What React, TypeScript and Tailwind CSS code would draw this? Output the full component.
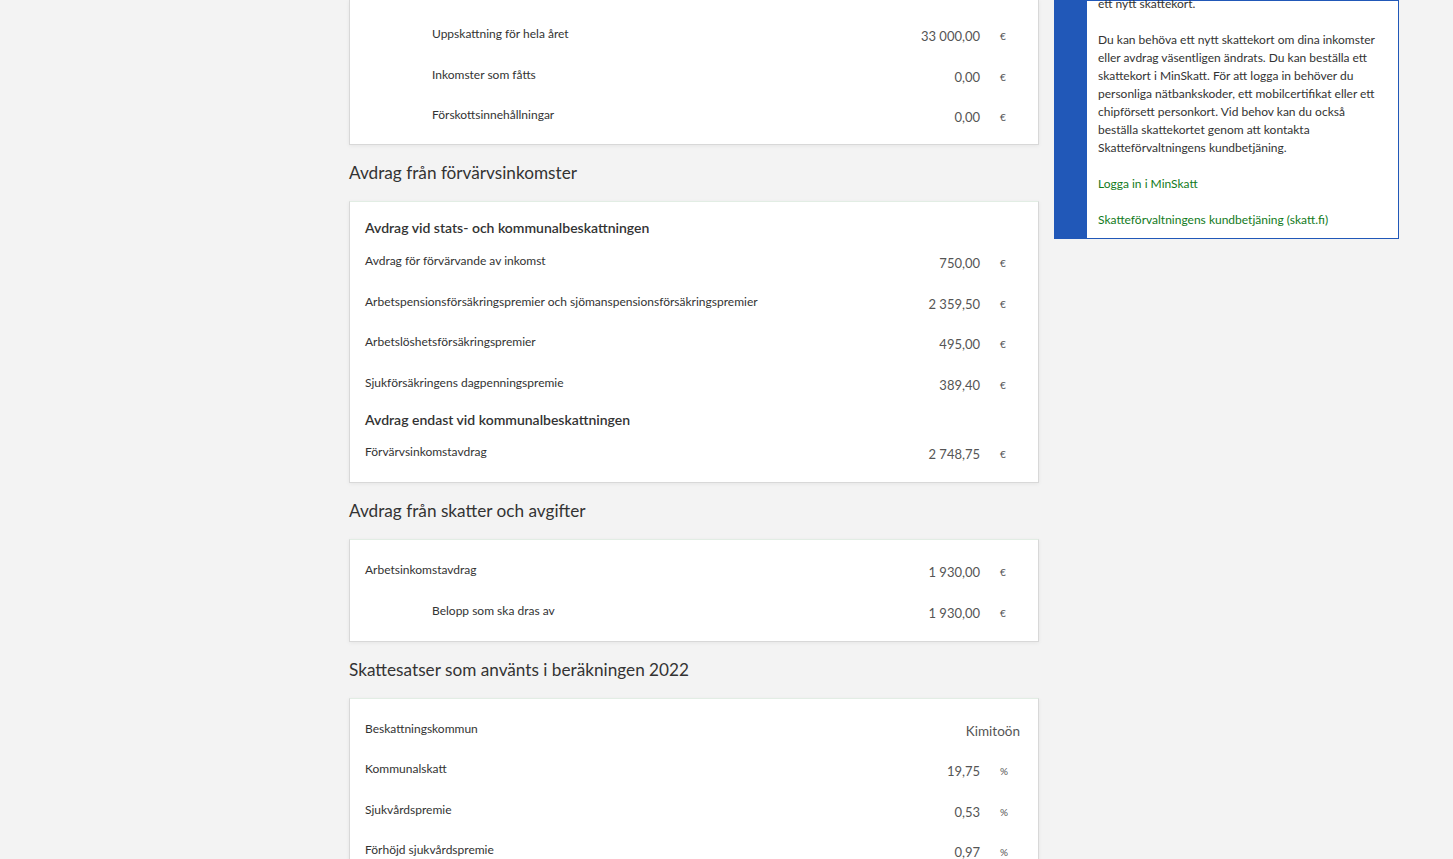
import React from 'react';

type Row = { label: string; value: string; unit?: string; indent?: boolean };

const font = { fontFamily: 'Lato, "Open Sans", sans-serif' };

function DataRow({ row }: { row: Row }) {
    return (
        <div className="flex h-[40.4px] items-center">
            <div className={`flex-1 pb-[4px] text-[12px] leading-[16px] text-[#333] ${row.indent ? 'pl-[67px]' : ''}`}>
                {row.label}
            </div>
            {row.unit === undefined ? (
                <div className="text-[13.5px] leading-[20px] text-[#555]">{row.value}</div>
            ) : (
                <>
                    <div className="text-right text-[13px] leading-[20px] text-[#555]">{row.value}</div>
                    <div className="ml-[20px] w-[20px] text-[10px] leading-[20px] text-[#555]">{row.unit}</div>
                </>
            )}
        </div>
    );
}

function SubHeading({ children, h }: { children: React.ReactNode; h: string }) {
    return (
        <div className={`flex items-center ${h} text-[14px] font-semibold text-[#333]`}>{children}</div>
    );
}

function Card({ children, className = '' }: { children: React.ReactNode; className?: string }) {
    return (
        <div className={`border border-[#d8d8d8] border-t-[#e2ede4] bg-white pl-[15px] pr-[18px] shadow-[0_1px_4px_rgba(0,0,0,0.06)] ${className}`}>
            {children}
        </div>
    );
}

function SectionTitle({ children }: { children: React.ReactNode }) {
    return <h2 className="flex h-[56px] items-center text-[17.2px] text-[#333]">{children}</h2>;
}

export default function App() {
    const topRows: Row[] = [
        { label: 'Uppskattning för hela året', value: '33 000,00', unit: '€', indent: true },
        { label: 'Inkomster som fåtts', value: '0,00', unit: '€', indent: true },
        { label: 'Förskottsinnehållningar', value: '0,00', unit: '€', indent: true },
    ];
    const statsRows: Row[] = [
        { label: 'Avdrag för förvärvande av inkomst', value: '750,00', unit: '€' },
        { label: 'Arbetspensionsförsäkringspremier och sjömanspensionsförsäkringspremier', value: '2 359,50', unit: '€' },
        { label: 'Arbetslöshetsförsäkringspremier', value: '495,00', unit: '€' },
        { label: 'Sjukförsäkringens dagpenningspremie', value: '389,40', unit: '€' },
    ];
    const skatterRows: Row[] = [
        { label: 'Arbetsinkomstavdrag', value: '1 930,00', unit: '€' },
        { label: 'Belopp som ska dras av', value: '1 930,00', unit: '€', indent: true },
    ];
    const satsRows: Row[] = [
        { label: 'Beskattningskommun', value: 'Kimitoön' },
        { label: 'Kommunalskatt', value: '19,75', unit: '%' },
        { label: 'Sjukvårdspremie', value: '0,53', unit: '%' },
        { label: 'Förhöjd sjukvårdspremie', value: '0,97', unit: '%' },
    ];

    return (
        <div className="h-[859px] overflow-hidden bg-[#f3f3f3]" style={font}>
            <div className="flex gap-[15px] pl-[349px]">
                <main className="w-[690px] shrink-0">
                    <Card className="border-t-0 pt-[16px] pb-[7px]">
                        {topRows.map((r) => <DataRow key={r.label} row={r} />)}
                    </Card>

                    <SectionTitle>Avdrag från förvärvsinkomster</SectionTitle>
                    <Card className="pt-[10px] pb-[8px]">
                        <SubHeading h="h-[31px]">Avdrag vid stats- och kommunalbeskattningen</SubHeading>
                        {statsRows.map((r) => <DataRow key={r.label} row={r} />)}
                        <SubHeading h="h-[29px]">Avdrag endast vid kommunalbeskattningen</SubHeading>
                        <DataRow row={{ label: 'Förvärvsinkomstavdrag', value: '2 748,75', unit: '€' }} />
                    </Card>

                    <SectionTitle>Avdrag från skatter och avgifter</SectionTitle>
                    <Card className="pt-[12px] pb-[8px]">
                        {skatterRows.map((r) => <DataRow key={r.label} row={r} />)}
                    </Card>

                    <SectionTitle>Skattesatser som använts i beräkningen 2022</SectionTitle>
                    <Card className="pt-[12px] pb-[8px]">
                        {satsRows.map((r) => <DataRow key={r.label} row={r} />)}
                    </Card>
                </main>

                <aside className="flex h-fit w-[345px] shrink-0">
                    <div className="w-[33px] shrink-0 bg-[#2158b8]" />
                    <div className="flex-1 border border-l-0 border-[#2158b8] bg-white pl-[11px] pr-[12px] pb-[9px] text-[12px] leading-[18px] text-[#333]">
                        <p className="-mt-[6px]">ett nytt skattekort.</p>
                        <p className="mt-[18px]">
                            Du kan behöva ett nytt skattekort om dina inkomster eller avdrag väsentligen ändrats. Du kan beställa ett skattekort i MinSkatt. För att logga in behöver du personliga nätbankskoder, ett mobilcertifikat eller ett chipförsett personkort. Vid behov kan du också beställa skattekortet genom att kontakta Skatteförvaltningens kundbetjäning.
                        </p>
                        <p className="mt-[18px]">
                            <a href="#" className="text-[#127a1c]">Logga in i MinSkatt</a>
                        </p>
                        <p className="mt-[18px]">
                            <a href="#" className="text-[#127a1c]">Skatteförvaltningens kundbetjäning (skatt.fi)</a>
                        </p>
                    </div>
                </aside>
            </div>
        </div>
    );
}
